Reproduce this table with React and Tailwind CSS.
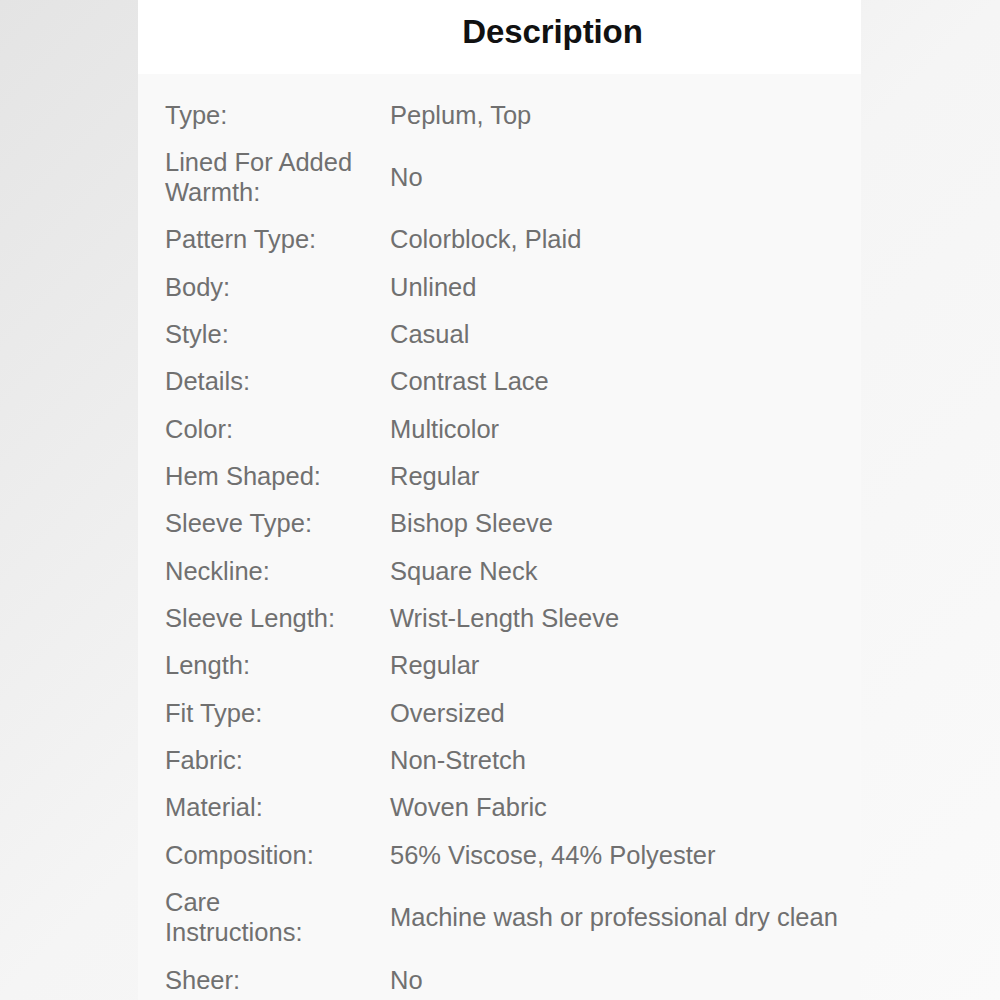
import React from "react";

const specs = [
  ["Type:", "Peplum, Top"],
  ["Lined For Added Warmth:", "No"],
  ["Pattern Type:", "Colorblock, Plaid"],
  ["Body:", "Unlined"],
  ["Style:", "Casual"],
  ["Details:", "Contrast Lace"],
  ["Color:", "Multicolor"],
  ["Hem Shaped:", "Regular"],
  ["Sleeve Type:", "Bishop Sleeve"],
  ["Neckline:", "Square Neck"],
  ["Sleeve Length:", "Wrist-Length Sleeve"],
  ["Length:", "Regular"],
  ["Fit Type:", "Oversized"],
  ["Fabric:", "Non-Stretch"],
  ["Material:", "Woven Fabric"],
  ["Composition:", "56% Viscose, 44% Polyester"],
  ["Care Instructions:", "Machine wash or professional dry clean"],
  ["Sheer:", "No"],
];

export default function App() {
  return (
    <div className="w-[1000px] h-[1000px] overflow-hidden flex justify-center bg-gradient-to-br from-[#e4e4e4] via-[#f5f5f5] to-[#fafafa] font-['Liberation_Sans',Arial,sans-serif]">
      <div className="ml-[-1px] w-[723px] flex flex-col">
        {/* header */}
        <div className="h-[74px] shrink-0 bg-white flex items-center justify-center pl-[106px]">
          <h1 className="text-[33px] font-bold text-[#111] tracking-[-0.1px] mt-[-10px]">Description</h1>
        </div>

        {/* spec table */}
        <div className="flex-1 bg-[#f9f9f9] pt-[17px] pl-[27px] pr-4">
          {specs.map(([label, value]) => (
            <div key={label} className="flex items-center py-[8.68px] text-[25.5px] leading-[30px] text-[#707070]">
              <div className="w-[225px] shrink-0 pr-[30px]">{label}</div>
              <div>{value}</div>
            </div>
          ))}
        </div>
      </div>
    </div>
  );
}
